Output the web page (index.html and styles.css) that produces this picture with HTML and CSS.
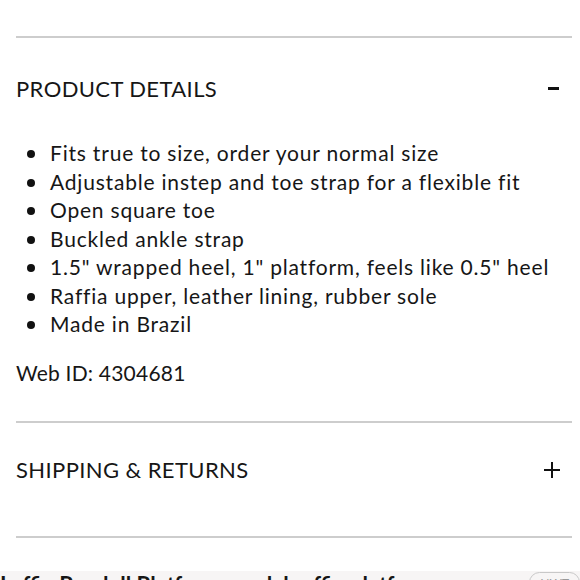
FILE: index.html
```html
<!DOCTYPE html>
<html>
<head>
<meta charset="utf-8">
<link rel="stylesheet" href="styles.css">
</head>
<body>
<div class="page">
  <div class="acc">
    <hr class="rule">
    <div class="acc-head open">
      <span class="acc-title">PRODUCT DETAILS</span>
      <span class="minus"></span>
    </div>
    <ul class="details">
      <li>Fits true to size, order your normal size</li>
      <li>Adjustable instep and toe strap for a flexible fit</li>
      <li>Open square toe</li>
      <li>Buckled ankle strap</li>
      <li>1.5" wrapped heel, 1" platform, feels like 0.5" heel</li>
      <li>Raffia upper, leather lining, rubber sole</li>
      <li>Made in Brazil</li>
    </ul>
    <p class="webid">Web ID: 4304681</p>
    <hr class="rule">
    <div class="acc-head closed">
      <span class="acc-title">SHIPPING &amp; RETURNS</span>
      <span class="plus"></span>
    </div>
    <hr class="rule">
  </div>
  <div class="strip">
    <span class="strip-text">Laffia Pandell Platform sandal raffia platform</span>
    <span class="pill">NWT</span>
  </div>
</div>
</body>
</html>
```
FILE: styles.css
```css
html, body {
  margin: 0;
  padding: 0;
  background: #fff;
}
.page {
  width: 580px;
  height: 580px;
  overflow: hidden;
  font-family: Lato, "Open Sans", sans-serif;
  color: #161616;
}
.acc {
  padding: 36px 8px 0 16px;
}
.rule {
  border: 0;
  height: 2px;
  background: #cdcdcd;
  margin: 0;
}
.acc-head {
  display: flex;
  align-items: center;
  justify-content: space-between;
  height: 28px;
}
.acc-head.open {
  margin: 36px 0 37px;
}
.acc-head.closed {
  margin: 33px 0 52px;
}
.acc-title {
  font-size: 22px;
  letter-spacing: 0.4px;
}
.minus {
  width: 11px;
  height: 3px;
  background: #111;
  margin-right: 13px;
  margin-top: 1px;
}
.plus {
  position: relative;
  width: 16px;
  height: 16px;
  margin-right: 12px;
}
.plus::before, .plus::after {
  content: "";
  position: absolute;
  background: #111;
}
.plus::before {
  left: 0;
  top: 7px;
  width: 16px;
  height: 2px;
}
.plus::after {
  left: 7px;
  top: 0;
  width: 2px;
  height: 16px;
}
.details {
  list-style: none;
  margin: 0;
  padding: 0;
  font-size: 21px;
  line-height: 28.5px;
  letter-spacing: 0.8px;
}
.details li {
  position: relative;
  padding-left: 34px;
}
.details li::before {
  content: "";
  position: absolute;
  left: 11px;
  top: 11px;
  width: 8px;
  height: 8px;
  border-radius: 50%;
  background: #111;
}
.webid {
  margin: 20px 0 34px;
  font-size: 21px;
  line-height: 28px;
  letter-spacing: 0.2px;
}
.strip {
  margin-top: 33px;
  background: #f7f5f5;
  height: 40px;
  display: flex;
  align-items: flex-start;
  justify-content: space-between;
}
.strip-text {
  font-weight: 700;
  font-size: 22px;
  line-height: 22px;
  margin-top: 3px;
  white-space: nowrap;
}
.pill {
  border: 1px solid #c8c8c8;
  border-radius: 14px;
  padding: 2px 10px;
  margin-top: 1px;
  font-size: 12px;
  color: #999;
}
```
